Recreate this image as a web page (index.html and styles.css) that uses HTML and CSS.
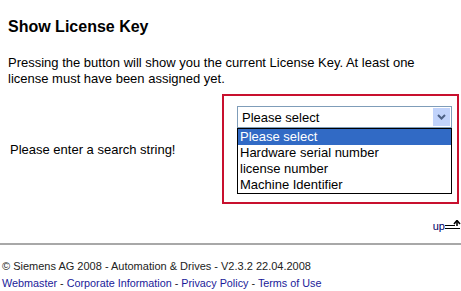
FILE: index.html
```html
<!DOCTYPE html>
<html lang="en">
<head>
    <meta charset="UTF-8">
    <title>Show License Key</title>
    <link rel="stylesheet" href="styles.css">
</head>
<body>
    <div class="page">
        <h1>Show License Key</h1>
        <p class="intro">Pressing the button will show you the current License Key. At least one license must have been assigned yet.</p>

        <div class="search-row">
            <div class="label">Please enter a search string!</div>
            <div class="error-box">
                <div class="combo">
                    <div class="combo-field">
                        <span>Please select</span>
                        <span class="combo-btn">
                            <svg width="9" height="6" viewBox="0 0 9 6"><path d="M1 1 L4.5 4.5 L8 1" fill="none" stroke="#4d6185" stroke-width="2"/></svg>
                        </span>
                    </div>
                    <ul class="combo-list">
                        <li class="selected">Please select</li>
                        <li>Hardware serial number</li>
                        <li>license number</li>
                        <li>Machine Identifier</li>
                    </ul>
                </div>
            </div>
        </div>

        <div class="up-row">
            <a href="#" class="up">up<svg width="16" height="10" viewBox="0 0 16 10"><path d="M0 5.5 H10 M0 8.5 H15" stroke="#000" stroke-width="1.2"/><path d="M9 4 L12 0.5 L15 4" fill="none" stroke="#000" stroke-width="1.6"/><path d="M12 1 V6" stroke="#000" stroke-width="1.6"/></svg></a>
        </div>
    </div>

    <hr class="rule">

    <div class="footer">
        <div class="copy">&copy; Siemens AG 2008 - Automation &amp; Drives - V2.3.2 22.04.2008</div>
        <div class="links">
            <a href="#">Webmaster</a> - <a href="#">Corporate Information</a> - <a href="#">Privacy Policy</a> - <a href="#">Terms of Use</a>
        </div>
    </div>
</body>
</html>
```

FILE: styles.css
```css
body {
    margin: 0;
    font-family: "Liberation Sans", Arial, sans-serif;
    font-size: 13px;
    color: #000;
    background: #fff;
}
.page {
    padding: 0 0 0 8px;
}
h1 {
    font-size: 16px;
    font-weight: bold;
    margin: 0;
    padding-top: 17px;
    line-height: 20px;
}
.intro {
    margin: 18px 0 0;
    line-height: 16px;
    width: 445px;
}
.search-row {
    display: flex;
    align-items: center;
    margin-top: 7px;
}
.label {
    width: 212px;
    padding-left: 2px;
}
.error-box {
    border: 2px solid #c8102e;
    width: 233px;
    height: 106px;
    box-sizing: content-box;
}
.combo {
    margin: 10px 0 0 13px;
    width: 215px;
}
.combo-field {
    display: flex;
    justify-content: space-between;
    align-items: center;
    height: 22px;
    border: 1px solid #7f9db9;
    padding-left: 4px;
    box-sizing: border-box;
}
.combo-btn {
    width: 17px;
    height: 18px;
    margin-right: 1px;
    background: #c1d3fb;
    display: flex;
    align-items: center;
    justify-content: center;
}
.combo-list {
    list-style: none;
    margin: 0;
    padding: 0;
    border: 1px solid #000;
}
.combo-list li {
    line-height: 16px;
    padding-left: 2px;
}
.combo-list li.selected {
    background: #316ac5;
    color: #fff;
}
.up-row {
    text-align: right;
    margin-top: 14px;
    line-height: 16px;
}
.up {
    color: #000066;
    text-decoration: none;
    font-size: 11px;
}
.up svg {
    vertical-align: baseline;
}
.rule {
    border: none;
    border-top: 2px solid #a8a8a8;
    margin: 9px 0 0;
}
.footer {
    padding: 13px 0 0 2px;
    line-height: 17px;
    color: #222;
}
.copy {
    font-size: 11px;
}
.links {
    font-size: 10.8px;
}
.links a {
    color: #1a1a99;
    text-decoration: none;
}
```
